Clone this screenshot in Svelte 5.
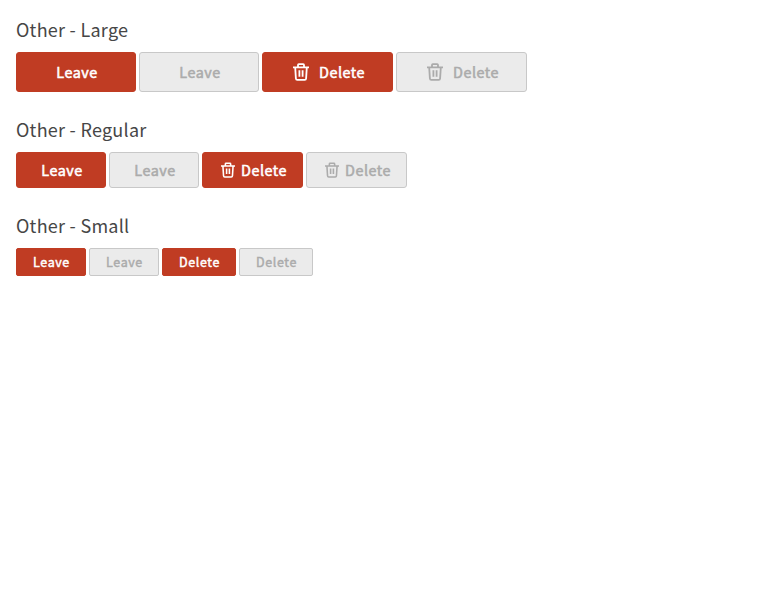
<script>
  const groups = [
    { title: 'Other - Large', size: 'large', icon: true },
    { title: 'Other - Regular', size: 'regular', icon: true },
    { title: 'Other - Small', size: 'small', icon: false }
  ];
  const buttons = [
    { label: 'Leave', disabled: false },
    { label: 'Leave', disabled: true },
    { label: 'Delete', disabled: false },
    { label: 'Delete', disabled: true }
  ];
</script>

<main>
  {#each groups as group}
    <section class={group.size}>
      <h2>{group.title}</h2>
      <div class="row">
        {#each buttons as button}
          <button class={button.label.toLowerCase()} disabled={button.disabled}>
            {#if group.icon && button.label === 'Delete'}
              <svg viewBox="0 0 16 18" fill="none" stroke="currentColor" stroke-width="1.8" aria-hidden="true">
                <path d="M0 4.4h16M5 4V2q0-.8.8-.8h4.4q.8 0 .8.8v2M2.2 4.5l.7 11q.1 1.4 1.4 1.4h7.4q1.3 0 1.4-1.4l.7-11M6.4 7.3v6.4M9.6 7.3v6.4" />
              </svg>
            {/if}
            <span>{button.label}</span>
          </button>
        {/each}
      </div>
    </section>
  {/each}
</main>

<style>
  :global(body) {
    margin: 0;
    background: #fff;
  }
  main {
    padding: 15px 16px;
    font-family: 'Source Sans Pro', 'Noto Sans CJK SC', 'Noto Sans', sans-serif;
  }
  section {
    margin-bottom: 23px;
  }
  h2 {
    margin: 0 0 9px;
    font-size: 18px;
    line-height: 28px;
    font-weight: 400;
    letter-spacing: 0.26px;
    color: #464646;
  }
  .row {
    display: flex;
    gap: 3px;
  }
  button {
    box-sizing: border-box;
    display: flex;
    align-items: center;
    justify-content: center;
    height: 40px;
    width: 120px;
    padding: 0 0 0 1px;
    border: 1px solid #c03c23;
    border-radius: 3px;
    background: #c03c23;
    color: #fff;
    font-family: inherit;
    font-size: 14.4px;
    font-weight: 400;
    line-height: 20px;
    letter-spacing: 0.5px;
    -webkit-text-stroke: 0.55px currentColor;
  }
  button:disabled {
    border-color: #c8c8c8;
    background: #ebebeb;
    color: #ababab;
  }
  span {
    margin-left: 1px;
  }
  svg {
    width: 16px;
    height: 18px;
    margin-right: 9px;
  }
  .delete {
    width: 131px;
    padding-left: 3px;
  }
  .regular button {
    width: 90px;
    height: 36px;
  }
  .regular .delete {
    width: 101px;
  }
  .regular svg {
    width: 14px;
    height: 16px;
    margin-right: 5px;
  }
  .small button {
    width: 70px;
    height: 28px;
    padding-left: 0;
    border-radius: 2px;
    font-size: 12.5px;
    letter-spacing: 0.6px;
    -webkit-text-stroke-width: 0.45px;
  }
  .small .delete {
    width: 74px;
  }
</style>
